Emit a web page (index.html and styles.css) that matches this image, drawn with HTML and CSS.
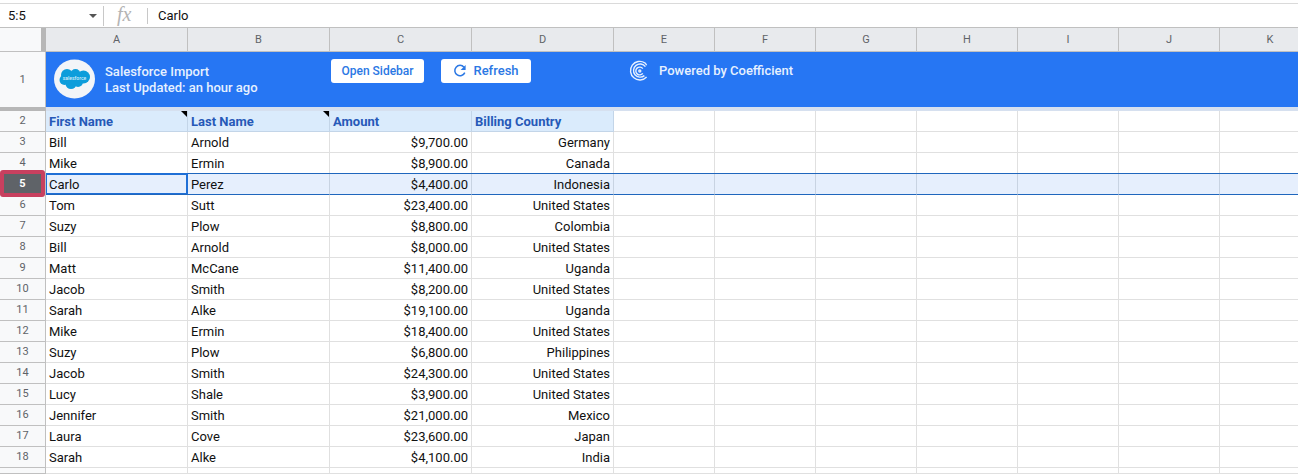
FILE: index.html
```
<!DOCTYPE html>
<html lang="en">
<head>
    <meta charset="UTF-8">
    <meta name="viewport" content="width=device-width, initial-scale=1.0">
    <title>Salesforce Import</title>
    <link rel="stylesheet" href="styles.css">
</head>
<body>
<div class="formula-bar">
    <div class="name-box">
        <input type="text" class="name-input" aria-label="Name box" value="5:5">
        <button type="button" class="name-arrow" aria-label="Named ranges">
            <svg width="8" height="4" viewBox="0 0 8 4"><path d="M0 0h8L4 4z" fill="#555"/></svg>
        </button>
    </div>
    <label class="fx" for="formula">fx</label>
    <input type="text" id="formula" class="formula-input" value="Carlo">
</div>

<div class="sheet">
<table class="grid">
    <colgroup>
        <col class="col-num">
        <col class="col-wide" span="4">
        <col class="col-std" span="7">
    </colgroup>
    <thead>
        <tr class="letters">
            <td class="corner"></td>
            <th>A</th><th>B</th><th>C</th><th>D</th><th>E</th><th>F</th><th>G</th><th>H</th><th>I</th><th>J</th><th>K</th>
        </tr>
        <tr class="frozen">
            <th>1</th>
            <td colspan="11">
                <div class="banner">
                    <div class="source">
                        <svg class="sf-logo" width="41" height="40" viewBox="0 0 41 40">
                            <ellipse cx="20.5" cy="20" rx="20.5" ry="19.5" fill="#f3f5f8"/>
                            <g fill="#0d9ddb">
                                <circle cx="13" cy="16" r="6"/>
                                <circle cx="21.5" cy="15" r="5"/>
                                <circle cx="29.5" cy="18" r="6.5"/>
                                <circle cx="10.5" cy="21" r="5"/>
                                <circle cx="17" cy="24.5" r="5.5"/>
                                <circle cx="24" cy="23" r="5"/>
                                <path d="M12 13h16v11H12z"/>
                            </g>
                            <text x="20.5" y="21" text-anchor="middle" class="sf-text">salesforce</text>
                        </svg>
                        <div class="source-text">
                            <div>Salesforce Import</div>
                            <div>Last Updated: an hour ago</div>
                        </div>
                    </div>
                    <div class="actions">
                        <button type="button">Open Sidebar</button>
                        <button type="button">
                            <svg width="14" height="14" viewBox="0 0 14 14" fill="none" stroke="#2b78e4" stroke-width="1.5">
                                <path d="M11 3.2A5.2 5.2 0 1 0 11.800 8.600"/>
                                <path d="M12.600 1v5H7.600z" fill="#2b78e4" stroke="none"/>
                            </svg>
                            Refresh
                        </button>
                    </div>
                    <div class="powered">
                        <svg width="20" height="22" viewBox="0 0 20 22" fill="none" stroke="#e6f0ff" stroke-width="1.4">
                            <path d="M15.8 2.800A9.300 9.300 0 1 0 17.600 17"/>
                            <path d="M17.600 5.200A9.300 9.300 0 0 0 15.800 2.800"/>
                            <path d="M16.400 6.600A6.600 6.600 0 1 0 15.400 15.600"/>
                            <path d="M13.800 8.600A3.900 3.900 0 1 0 13.800 13.400"/>
                            <circle cx="10.8" cy="11" r="1"/>
                        </svg>
                        Powered by Coefficient
                    </div>
                </div>
            </td>
        </tr>
    </thead>
    <tbody>
        <tr class="fields"><th>2</th><td class="note">First Name</td><td class="note">Last Name</td><td>Amount</td><td>Billing Country</td><td></td><td></td><td></td><td></td><td></td><td></td><td></td></tr>
        <tr><th>3</th><td>Bill</td><td>Arnold</td><td>$9,700.00</td><td>Germany</td><td></td><td></td><td></td><td></td><td></td><td></td><td></td></tr>
        <tr><th>4</th><td>Mike</td><td>Ermin</td><td>$8,900.00</td><td>Canada</td><td></td><td></td><td></td><td></td><td></td><td></td><td></td></tr>
        <tr class="selected"><th>5</th><td class="active">Carlo</td><td>Perez</td><td>$4,400.00</td><td>Indonesia</td><td></td><td></td><td></td><td></td><td></td><td></td><td></td></tr>
        <tr><th>6</th><td>Tom</td><td>Sutt</td><td>$23,400.00</td><td>United States</td><td></td><td></td><td></td><td></td><td></td><td></td><td></td></tr>
        <tr><th>7</th><td>Suzy</td><td>Plow</td><td>$8,800.00</td><td>Colombia</td><td></td><td></td><td></td><td></td><td></td><td></td><td></td></tr>
        <tr><th>8</th><td>Bill</td><td>Arnold</td><td>$8,000.00</td><td>United States</td><td></td><td></td><td></td><td></td><td></td><td></td><td></td></tr>
        <tr><th>9</th><td>Matt</td><td>McCane</td><td>$11,400.00</td><td>Uganda</td><td></td><td></td><td></td><td></td><td></td><td></td><td></td></tr>
        <tr><th>10</th><td>Jacob</td><td>Smith</td><td>$8,200.00</td><td>United States</td><td></td><td></td><td></td><td></td><td></td><td></td><td></td></tr>
        <tr><th>11</th><td>Sarah</td><td>Alke</td><td>$19,100.00</td><td>Uganda</td><td></td><td></td><td></td><td></td><td></td><td></td><td></td></tr>
        <tr><th>12</th><td>Mike</td><td>Ermin</td><td>$18,400.00</td><td>United States</td><td></td><td></td><td></td><td></td><td></td><td></td><td></td></tr>
        <tr><th>13</th><td>Suzy</td><td>Plow</td><td>$6,800.00</td><td>Philippines</td><td></td><td></td><td></td><td></td><td></td><td></td><td></td></tr>
        <tr><th>14</th><td>Jacob</td><td>Smith</td><td>$24,300.00</td><td>United States</td><td></td><td></td><td></td><td></td><td></td><td></td><td></td></tr>
        <tr><th>15</th><td>Lucy</td><td>Shale</td><td>$3,900.00</td><td>United States</td><td></td><td></td><td></td><td></td><td></td><td></td><td></td></tr>
        <tr><th>16</th><td>Jennifer</td><td>Smith</td><td>$21,000.00</td><td>Mexico</td><td></td><td></td><td></td><td></td><td></td><td></td><td></td></tr>
        <tr><th>17</th><td>Laura</td><td>Cove</td><td>$23,600.00</td><td>Japan</td><td></td><td></td><td></td><td></td><td></td><td></td><td></td></tr>
        <tr><th>18</th><td>Sarah</td><td>Alke</td><td>$4,100.00</td><td>India</td><td></td><td></td><td></td><td></td><td></td><td></td><td></td></tr>
        <tr class="cut"><th></th><td></td><td></td><td></td><td></td><td></td><td></td><td></td><td></td><td></td><td></td><td></td></tr>
    </tbody>
</table>
</div>
</body>
</html>
```
FILE: styles.css
```
body {
    margin: 0;
    padding-top: 3px;
    background: #fff;
    color: #111;
    font-family: Roboto, "Liberation Sans", sans-serif;
    font-size: 13px;
    overflow: hidden;
}
input, button {
    font: inherit;
    color: inherit;
    border: none;
    background: none;
    padding: 0;
    outline: none;
}
button {
    cursor: pointer;
}

/* formula bar */
.formula-bar {
    display: flex;
    align-items: center;
    height: 23px;
    border-top: 1px solid #dadada;
    border-bottom: 1px solid #c0c0c0;
}
.name-box {
    display: flex;
    align-items: center;
    box-sizing: border-box;
    width: 104px;
    height: 20px;
    padding: 0 6px 0 8px;
    border-right: 1px solid #c8c8c8;
}
.name-input {
    flex: 1;
    min-width: 0;
}
.name-arrow {
    display: flex;
}
.fx {
    width: 30px;
    height: 16px;
    padding-left: 13px;
    border-right: 1px solid #c8c8c8;
    color: #b4b4b4;
    font: italic 20px/12px "Liberation Serif", serif;
}
.formula-input {
    flex: 1;
    padding-left: 10px;
}

/* grid */
.sheet {
    overflow: hidden;
}
.grid {
    width: 1321px;
    table-layout: fixed;
    border-collapse: separate;
    border-spacing: 0;
}
.col-num {
    width: 46px;
}
.col-wide {
    width: 142px;
}
.col-std {
    width: 101px;
}
th, td {
    box-sizing: border-box;
    height: 21px;
    padding: 2px 3px 0;
    border-right: 1px solid #e0e0e0;
    border-bottom: 1px solid #e0e0e0;
    line-height: 16px;
    text-align: left;
    white-space: nowrap;
}
th {
    padding: 0;
    background: #f8f9fa;
    border-color: #c0c0c0;
    color: #5f6368;
    font-size: 11px;
    font-weight: 400;
    text-align: center;
}
.letters th {
    height: 24px;
    background: #e8eaed;
}
.letters .corner {
    background: #f8f9fa;
    border-right: 5px solid #b7b7b7;
    border-bottom-color: #c0c0c0;
}
.frozen th {
    height: 59px;
    border-bottom: 4px solid #b7b7b7;
}
.frozen td {
    padding: 0;
    background: #2676f3;
    border-right: none;
    border-bottom: 4px solid #d6e0ef;
}
td:nth-child(4), td:nth-child(5) {
    text-align: right;
}
.fields td {
    text-align: left;
}
.fields td:nth-child(-n+5) {
    background: #daebfc;
    border-color: #c3d5e8;
    color: #2659b8;
    font-weight: 700;
}
.note {
    position: relative;
}
.note::after {
    content: "";
    position: absolute;
    top: 0;
    right: 0;
    border-top: 6px solid #000;
    border-left: 6px solid transparent;
}
.selected td {
    background: #e6effd;
    border-right-color: #c8d3e2;
    border-bottom: 1px solid #1f66bd;
    box-shadow: 0 -1px 0 #1f66bd;
}
.selected .active {
    border-right-color: #1f6fd6;
    box-shadow: 0 -1px 0 #1f6fd6, inset 0 0 0 1px #1f6fd6;
}
.selected th {
    position: relative;
    background: #5f6368;
    color: #fff;
    font-weight: 700;
}
.selected th::after {
    content: "";
    position: absolute;
    inset: -4px 0 -3px 0;
    border: 4px solid #c8405f;
    border-radius: 3px;
}
.cut th, .cut td {
    height: 6px;
    padding: 0;
    line-height: 0;
}

/* import banner */
.banner {
    display: flex;
    align-items: flex-start;
    height: 48px;
    padding: 7px 8px 0;
    color: #e6f1ff;
    font-weight: 500;
}
.source {
    display: flex;
    gap: 10px;
    width: 277px;
}
.source-text {
    padding-top: 5px;
}
.sf-text {
    fill: #d8eefa;
    font-size: 5px;
}
.actions {
    display: flex;
    gap: 17px;
    width: 298px;
}
.actions button {
    display: flex;
    align-items: center;
    justify-content: center;
    gap: 6px;
    min-width: 93px;
    height: 24px;
    border-radius: 3px;
    background: #fff;
    color: #2b78e4;
    font-size: 12px;
    font-weight: 500;
}
.actions button + button {
    min-width: 90px;
    font-size: 13px;
}
.powered {
    display: flex;
    align-items: center;
    gap: 10px;
    height: 24px;
}
```
